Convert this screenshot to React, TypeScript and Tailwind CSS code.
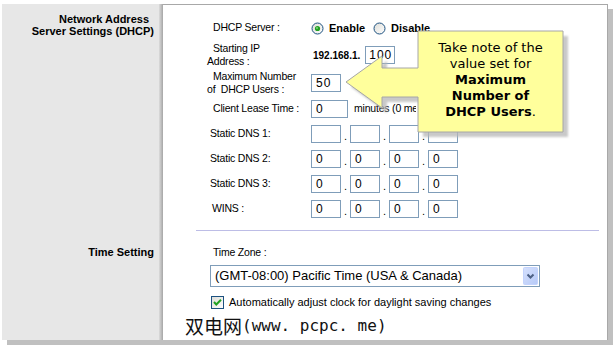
import React from "react";

const Box = ({ w, v = "", pl = 4 }: { w: number; v?: string; pl?: number }) => (
  <div
    className="h-[18px] border border-[#7f9db9] bg-white flex items-center text-[12px] tracking-[1px] text-black leading-none"
    style={{ width: w, paddingLeft: pl }}
  >
    {v}
  </div>
);

const Dot = () => (
  <div className="w-[9px] h-[18px] flex items-end justify-center text-[11px] leading-[14px]">.</div>
);

const Radio = ({ checked }: { checked?: boolean }) => (
  <svg width="13" height="13" viewBox="0 0 13 13">
    <defs>
      <linearGradient id="rgr" x1="0" y1="0" x2="1" y2="1">
        <stop offset="0" stopColor="#dcdcd7" />
        <stop offset="1" stopColor="#ffffff" />
      </linearGradient>
    </defs>
    <circle cx="6.5" cy="6.5" r="5.5" fill="url(#rgr)" stroke="#1c5180" strokeWidth="1" />
    {checked && <circle cx="6.5" cy="6.5" r="2.6" fill="#21a121" />}
    {checked && <circle cx="6" cy="6" r="1" fill="#7fd47f" />}
  </svg>
);

const Label = ({ children, pl = 6 }: { children: React.ReactNode; pl?: number }) => (
  <div className="w-[104px] shrink-0" style={{ paddingLeft: pl }}>
    {children}
  </div>
);

const DnsRow = ({ label, pl, values }: { label: string; pl: number; values: string[] }) => (
  <div className="flex items-center h-[18px] mt-[7px]">
    <Label pl={pl}>{label}</Label>
    <div className="flex">
      <Box w={30} v={values[0]} />
      <Dot />
      <Box w={30} v={values[1]} />
      <Dot />
      <Box w={30} v={values[2]} />
      <Dot />
      <Box w={30} v={values[3]} />
    </div>
  </div>
);

export default function App() {
  return (
    <div
      className="relative w-[615px] h-[348px] bg-white overflow-hidden text-black"
      style={{ fontFamily: '"Liberation Sans", Arial, sans-serif' }}
    >
      <div className="pt-[4px] pl-[2px]">
        <div className="flex w-[606px] h-[336px] shadow-[5px_5px_0_#c0c0c0]">
          {/* left panel */}
          <div className="w-[157px] bg-[#e7e7e7] flex flex-col items-end pr-[5px] pt-[9px] text-[11px] leading-[12px] font-bold">
            <div className="mr-[5px]">Network Address</div>
            <div>Server Settings (DHCP)</div>
            <div className="mt-[209px]">Time Setting</div>
          </div>
          <div className="w-[4px] bg-gradient-to-r from-[#dcdcdc] to-[#a6a6a6]" />
          {/* content */}
          <div className="flex-1 bg-white border-t border-r border-[#a8a8a8] flex flex-col text-[10.5px] tracking-[-0.2px]">
            <div className="pl-[44px] pt-[14px] flex flex-col">
              <div className="flex items-center h-[18px]">
                <Label>DHCP Server :</Label>
                <div className="flex items-center">
                  <Radio checked />
                  <span className="ml-[5px] font-bold text-[11px] tracking-normal">Enable</span>
                  <span className="ml-[8px] flex"><Radio /></span>
                  <span className="ml-[5px] font-bold text-[11px] tracking-normal">Disable</span>
                </div>
              </div>
              <div className="flex items-center h-[26px] mt-[5px]">
                <Label pl={0}>
                  <div className="leading-[13px] pl-[6px]">Starting IP</div>
                  <div className="leading-[13px]">Address :</div>
                </Label>
                <div className="flex items-center">
                  <span className="ml-[2px] font-bold text-[10px] tracking-normal">192.168.1.</span>
                  <div className="ml-[5px]"><Box w={30} v="100" pl={3} /></div>
                </div>
              </div>
              <div className="flex items-center h-[26px] mt-[2px]">
                <Label pl={0}>
                  <div className="leading-[13px] pl-[6px]">Maximum Number</div>
                  <div className="leading-[13px]">of&nbsp; DHCP Users :</div>
                </Label>
                <Box w={30} v="50" />
              </div>
              <div className="flex items-center h-[18px] mt-[4px]">
                <Label>Client Lease Time :</Label>
                <Box w={37} v="0" />
                <span className="ml-[6px] w-[62px] overflow-hidden whitespace-nowrap">minutes (0 means one day)</span>
              </div>
              <DnsRow label="Static DNS 1:" pl={3} values={["", "", "", ""]} />
              <DnsRow label="Static DNS 2:" pl={3} values={["0", "0", "0", "0"]} />
              <DnsRow label="Static DNS 3:" pl={3} values={["0", "0", "0", "0"]} />
              <DnsRow label="WINS :" pl={5} values={["0", "0", "0", "0"]} />
            </div>
            <div className="ml-[33px] w-[403px] h-px bg-[#bdbde6] mt-[12px]" />
            <div className="ml-[50px] mt-[14px] leading-[14px]">Time Zone :</div>
            <div className="ml-[47px] mt-[6px] w-[330px] h-[22px] border border-[#7f9db9] flex items-center justify-between pl-[4px] pr-[1px]">
              <span className="text-[13px] tracking-normal whitespace-nowrap">(GMT-08:00) Pacific Time (USA &amp; Canada)</span>
              <svg width="15" height="18" viewBox="0 0 15 18">
                <defs>
                  <linearGradient id="sel" x1="0" y1="0" x2="1" y2="1">
                    <stop offset="0" stopColor="#d6e1fd" />
                    <stop offset="1" stopColor="#b6c9f7" />
                  </linearGradient>
                </defs>
                <rect x="0.5" y="0.5" width="14" height="17" rx="1" fill="url(#sel)" stroke="#c3d3fd" />
                <path d="M4.5 7.5 L7.5 10.5 L10.5 7.5" fill="none" stroke="#4d6185" strokeWidth="2" />
              </svg>
            </div>
            <div className="ml-[48px] mt-[8px] h-[14px] flex items-center">
              <svg width="13" height="13" viewBox="0 0 13 13">
                <defs>
                  <linearGradient id="cbg" x1="0" y1="0" x2="1" y2="1">
                    <stop offset="0" stopColor="#dcdcd7" />
                    <stop offset="1" stopColor="#ffffff" />
                  </linearGradient>
                </defs>
                <rect x="0.5" y="0.5" width="12" height="12" fill="url(#cbg)" stroke="#1c5180" />
                <path d="M3 6 L5.3 8.5 L10 3.8" fill="none" stroke="#21a121" strokeWidth="2" />
              </svg>
              <span className="ml-[5px] whitespace-nowrap text-[11px] tracking-normal">Automatically adjust clock for daylight saving changes</span>
            </div>
            <div className="ml-[22px] mt-[6px] h-[22px] flex items-center whitespace-nowrap text-[#111] tracking-normal">
              <span className="text-[19px] leading-[22px]" style={{ fontFamily: '"Noto Sans CJK SC", sans-serif' }}>双电网</span>
              <span className="text-[16px] leading-[22px]" style={{ fontFamily: '"DejaVu Sans Mono", monospace' }}>(www. pcpc. me)</span>
            </div>
          </div>
        </div>
      </div>

      {/* callout overlay */}
      <svg className="absolute left-0 top-0 pointer-events-none" width="615" height="348" viewBox="0 0 615 348">
        <defs>
          <filter id="blur" x="-10%" y="-10%" width="120%" height="120%">
            <feGaussianBlur stdDeviation="1" />
          </filter>
        </defs>
        <polygon
          transform="translate(5,5)"
          points="418,31 563,31 563,132 418,132 418,97 382,97 382,108 346,82 382,56 382,68 418,68"
          fill="#b8b8b8"
          opacity="0.75"
          filter="url(#blur)"
        />
        <polygon
          points="418,31 563,31 563,132 418,132 418,97 382,97 382,108 346,82 382,56 382,68 418,68"
          fill="#ffff9c"
          stroke="#a6a6a6"
          strokeWidth="1"
        />
      </svg>
      <div
        className="absolute left-[418px] top-[40px] w-[145px] text-center text-[13px] leading-[16px] text-black"
        style={{ fontFamily: '"DejaVu Sans", Verdana, sans-serif' }}
      >
        Take note of the
        <br />
        value set for
        <br />
        <b>Maximum</b>
        <br />
        <b>Number of</b>
        <br />
        <b>DHCP Users</b>.
      </div>
    </div>
  );
}
